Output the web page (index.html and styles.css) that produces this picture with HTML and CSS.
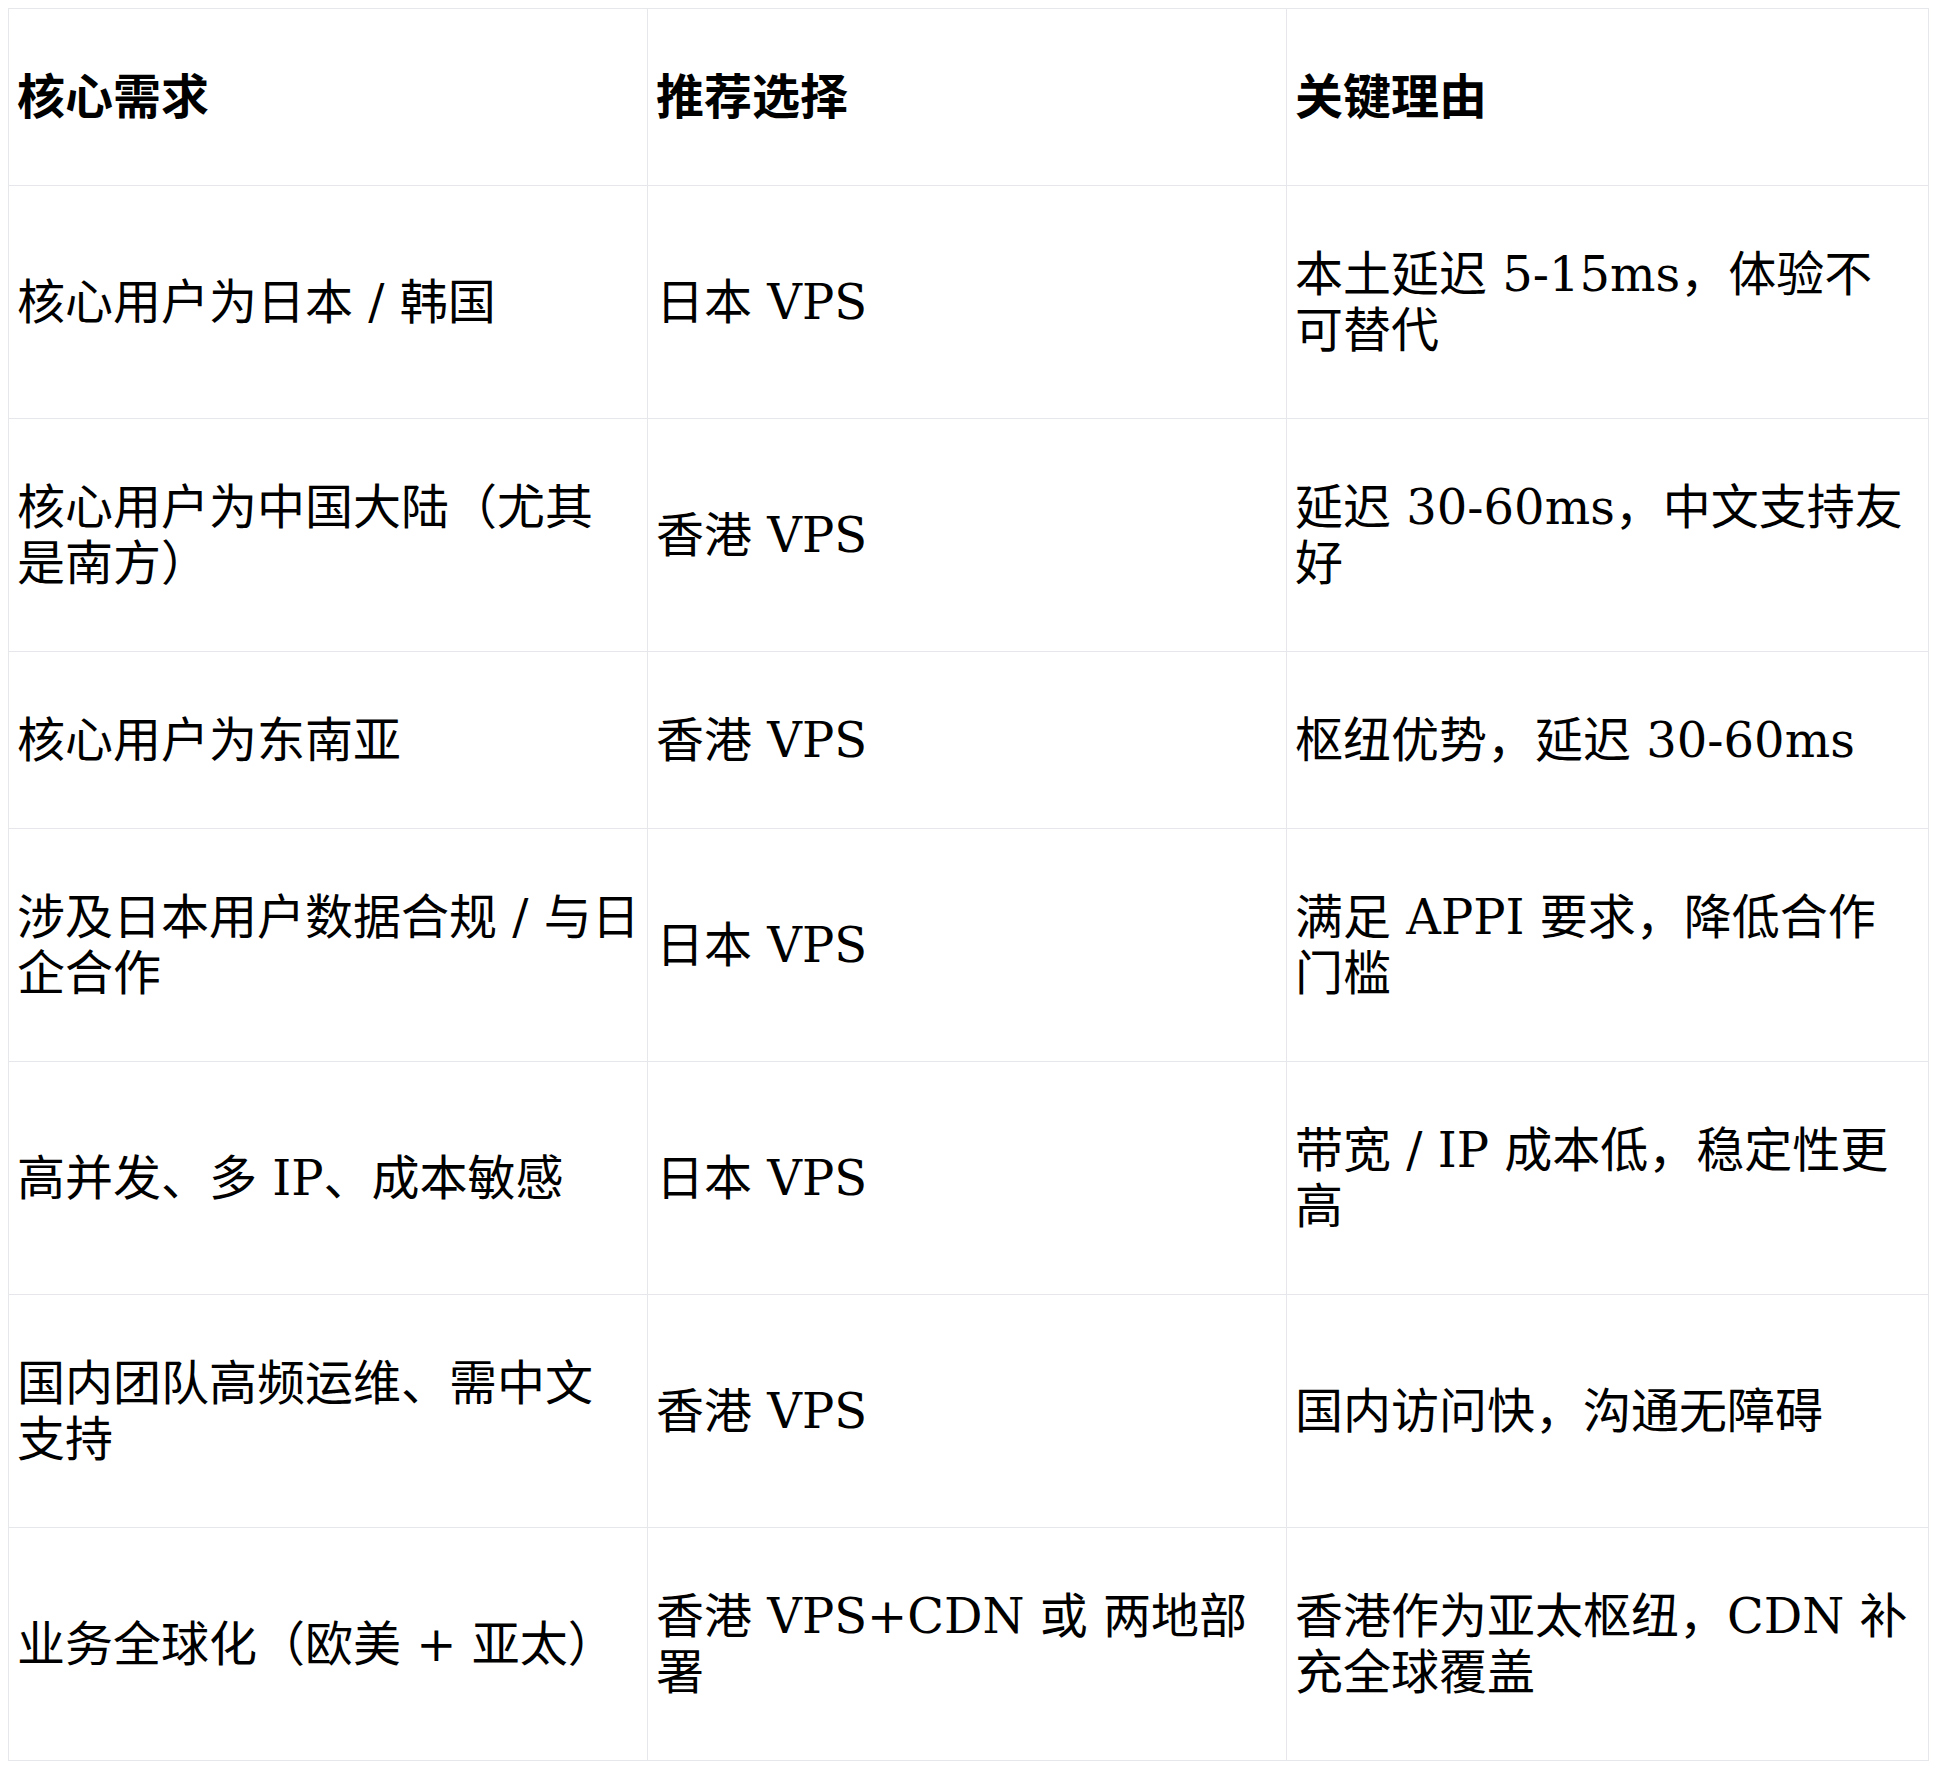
FILE: index.html
```html
<!DOCTYPE html>
<html lang="zh-CN">
<head>
<meta charset="utf-8">
<title>VPS 选择</title>
<link rel="stylesheet" href="styles.css">
</head>
<body>
<table class="compare">
  <colgroup>
    <col class="c1">
    <col class="c2">
    <col class="c3">
  </colgroup>
  <thead>
    <tr><th>核心需求</th><th>推荐选择</th><th>关键理由</th></tr>
  </thead>
  <tbody>
    <tr><td>核心用户为日本 / 韩国</td><td>日本 VPS</td><td>本土延迟 5-15ms，体验不可替代</td></tr>
    <tr><td>核心用户为中国大陆（尤其是南方）</td><td>香港 VPS</td><td>延迟 30-60ms，中文支持友好</td></tr>
    <tr><td>核心用户为东南亚</td><td>香港 VPS</td><td>枢纽优势，延迟 30-60ms</td></tr>
    <tr><td>涉及日本用户数据合规 / 与日企合作</td><td>日本 VPS</td><td>满足 APPI 要求，降低合作门槛</td></tr>
    <tr><td>高并发、多 IP、成本敏感</td><td>日本 VPS</td><td>带宽 / IP 成本低，稳定性更高</td></tr>
    <tr><td>国内团队高频运维、需中文支持</td><td>香港 VPS</td><td>国内访问快，沟通无障碍</td></tr>
    <tr><td>业务全球化（欧美 + 亚太）</td><td>香港 VPS+CDN 或 两地部署</td><td>香港作为亚太枢纽，CDN 补充全球覆盖</td></tr>
  </tbody>
</table>
</body>
</html>
```

FILE: styles.css
```css
html, body {
  background: #ffffff;
}
body {
  margin: 8px;
  font-family: "DejaVu Serif", "Noto Sans CJK SC", serif;
  color: #000000;
}
.compare {
  border-collapse: collapse;
  table-layout: fixed;
  width: 1920px;
  font-size: 48px;
  line-height: 56px;
}
.compare .c1 { width: 639px; }
.compare .c2 { width: 639px; }
.compare .c3 { width: 642px; }
.compare th,
.compare td {
  border: 1px solid #e5e7eb;
  padding: 60px 8px;
  text-align: left;
  vertical-align: middle;
}
.compare th:first-child,
.compare td:first-child {
  padding-right: 7px;
}
.compare th {
  font-weight: bold;
}
```
